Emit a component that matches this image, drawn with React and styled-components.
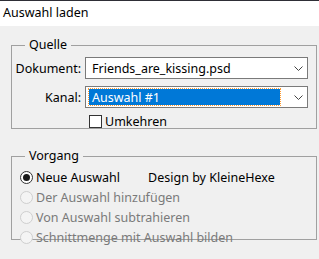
import React from 'react';
import styled, { createGlobalStyle } from 'styled-components';

const GlobalStyle = createGlobalStyle`
  html, body {
    margin: 0;
    padding: 0;
    background: #f0f0f0;
  }
  body {
    font-family: 'Noto Sans', 'Liberation Sans', sans-serif;
    font-size: 12.5px;
    color: #000;
  }
`;

export default function App() {
  return (
    <>
      <GlobalStyle />
      <Window>
        <TitleBar>Auswahl laden</TitleBar>
        <Body>
          <Group>
            <Legend>Quelle</Legend>
            <FormGrid>
              <FieldLabel>Dokument:</FieldLabel>
              <Combo>
                <ComboValue>Friends_are_kissing.psd</ComboValue>
                <Chevron />
              </Combo>
              <FieldLabel>Kanal:</FieldLabel>
              <Combo>
                <ComboValue selected>Auswahl #1</ComboValue>
                <Chevron />
              </Combo>
              <span />
              <CheckRow>
                <CheckBox />
                Umkehren
              </CheckRow>
            </FormGrid>
          </Group>
          <Group $spaced>
            <Legend>Vorgang</Legend>
            <RadioList>
              <RadioRow>
                <Radio checked />
                Neue Auswahl
                <Credit>Design by KleineHexe</Credit>
              </RadioRow>
              <RadioRow disabled>
                <Radio disabled />
                Der Auswahl hinzufügen
              </RadioRow>
              <RadioRow disabled>
                <Radio disabled />
                Von Auswahl subtrahieren
              </RadioRow>
              <RadioRow disabled>
                <Radio disabled />
                Schnittmenge mit Auswahl bilden
              </RadioRow>
            </RadioList>
          </Group>
        </Body>
      </Window>
    </>
  );
}

function Chevron() {
  return (
    <ChevronIcon width="9" height="5" viewBox="0 0 9 5">
      <path d="M0.5 0.5 L4.5 4.5 L8.5 0.5" fill="none" stroke="#444" strokeWidth="1" />
    </ChevronIcon>
  );
}

function Radio({ checked, disabled }) {
  return (
    <RadioCircle disabled={disabled}>
      {checked && <RadioDot />}
    </RadioCircle>
  );
}

const Window = styled.div`
  width: 319px;
  height: 259px;
  display: flex;
  flex-direction: column;
  background: #f0f0f0;
  overflow: hidden;
`;

const TitleBar = styled.div`
  height: 26px;
  box-sizing: border-box;
  border-top: 1px solid #2e2e36;
  background: #fff;
  padding: 0 0 2px 3px;
  display: flex;
  align-items: center;
`;

const Body = styled.div`
  display: flex;
  flex-direction: column;
  padding: 11px 2px 0 11px;
`;

const Group = styled.fieldset`
  margin: ${p => (p.$spaced ? '19px' : '0')} 0 0 0;
  padding: 0 0 8px 0;
  border: 1px solid #a0a0a0;
  min-width: 0;
  height: 92px;
  box-sizing: border-box;
`;

const Legend = styled.legend`
  margin-left: 13px;
  padding: 0 4px;
  line-height: 16px;
`;

const FormGrid = styled.div`
  display: grid;
  grid-template-columns: 69px 223px;
  column-gap: 4px;
  row-gap: 7px;
  align-items: center;
  padding-top: 4px;
`;

const FieldLabel = styled.span`
  text-align: right;
`;

const Combo = styled.div`
  height: 22px;
  box-sizing: border-box;
  border: 1px solid #7a7a7a;
  background: #fff;
  display: flex;
  align-items: center;
  padding: 2px 3px;
`;

const ComboValue = styled.div`
  flex: 1;
  height: 100%;
  display: flex;
  align-items: center;
  padding-left: 3px;
  margin-right: 14px;
  box-sizing: border-box;
  background: ${p => (p.selected ? '#0078d7' : 'transparent')};
  color: ${p => (p.selected ? '#fff' : '#000')};
  outline: ${p => (p.selected ? '1px dotted #ff9a2e' : 'none')};
`;

const ChevronIcon = styled.svg`
  flex: none;
  margin-right: 1px;
`;

const CheckRow = styled.label`
  display: flex;
  align-items: center;
  gap: 3px;
  padding-left: 4px;
  margin-top: -2px;
`;

const CheckBox = styled.span`
  width: 13px;
  height: 13px;
  box-sizing: border-box;
  border: 1px solid #333;
  background: #fff;
`;

const RadioList = styled.div`
  display: flex;
  flex-direction: column;
  padding: 3px 0 0 8px;
`;

const RadioRow = styled.div`
  height: 20px;
  display: flex;
  align-items: center;
  gap: 3px;
  color: ${p => (p.disabled ? '#7a7a7a' : '#000')};
`;

const RadioCircle = styled.span`
  width: 13px;
  height: 13px;
  box-sizing: border-box;
  border-radius: 50%;
  border: 1px solid ${p => (p.disabled ? '#cfcfcf' : '#333')};
  background: ${p => (p.disabled ? '#f4f4f4' : '#fff')};
  display: flex;
  align-items: center;
  justify-content: center;
`;

const RadioDot = styled.span`
  width: 7px;
  height: 7px;
  border-radius: 50%;
  background: #1a1a1a;
`;

const Credit = styled.span`
  margin-left: 25px;
  color: #000;
`;
